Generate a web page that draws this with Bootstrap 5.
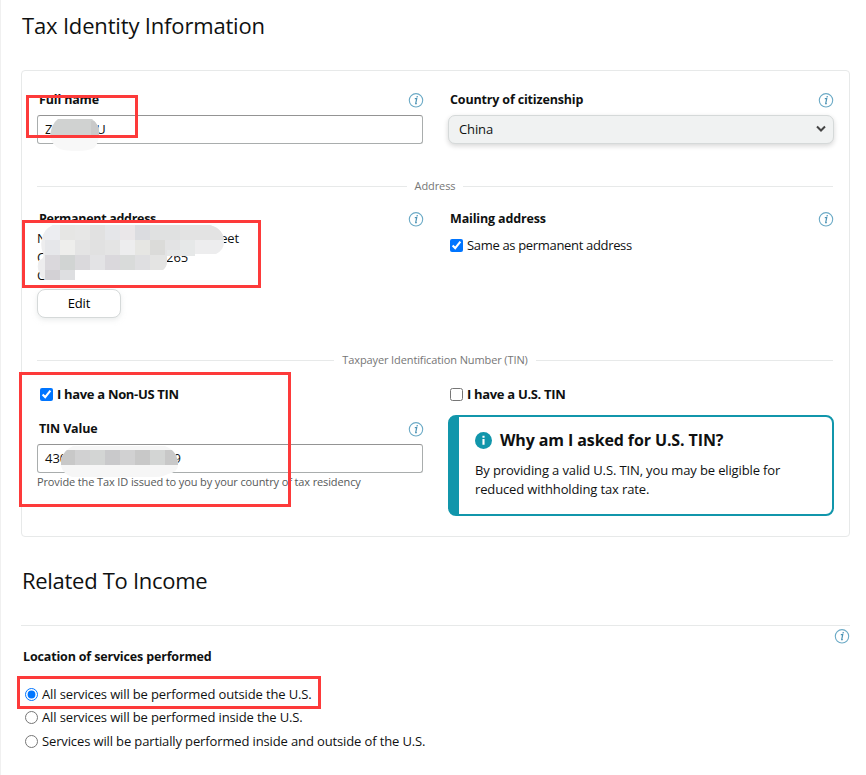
<!DOCTYPE html>
<html lang="en">
<head>
<meta charset="utf-8">
<meta name="viewport" content="width=device-width, initial-scale=1">
<title>Tax Identity Information</title>
<link href="https://cdn.jsdelivr.net/npm/bootstrap@5.3.0/dist/css/bootstrap.min.css" rel="stylesheet">
<style>
body{font-family:"Open Sans","Noto Sans",sans-serif;font-size:13px;line-height:19px;letter-spacing:-.13px;color:#0f1111;background:#fff;overflow:hidden}
.page{height:775px;border-left:1px solid #f0f0f0;padding:0 16px 0 20px}
.title{font-size:22px;line-height:30px;font-weight:400;margin:0;padding-left:1px;letter-spacing:-.17px}
.title-one{padding-top:10px}
.title-two{margin-top:28px;letter-spacing:-.29px}
.panel{margin-top:30px;height:467px;border:1px solid #e7e9e9;border-radius:4px;padding:19px 15px 0 15px}
.half{width:386px;flex:none}
.lbl{font-weight:700;font-size:12.5px;padding-left:2px;letter-spacing:-.16px}
.lbl-tight{letter-spacing:-.3px}
.head-row{height:19px;margin-bottom:6px}
.info{width:16px;height:16px;flex:none;display:block}
.half:not(.half-right) .info{margin-right:-1px}
.field{height:29px;border:1px solid #a9adad;border-radius:3px;border-top-color:#949494;padding:0 7px;line-height:27px;font-size:13px}
.field-tin{padding-right:241px;letter-spacing:0}
.picker{height:29px;border:1px solid #d5d9d9;border-radius:7px;background:#f0f2f2;box-shadow:0 2px 5px rgba(15,17,17,.17);padding:0 7px 1px 10px;line-height:25px}
.rule{height:1px;background:#e7e9e9}
.divider{gap:8px;margin-right:1px;font-size:11px;line-height:14px;letter-spacing:-.11px;color:#767676}
.divider-address{margin-top:35px}
.address-row{margin-top:16px;height:144px}
.address-row .head-row{margin-bottom:1px}
.address-lines{line-height:18.600px}
.line-one{width:202px}
.line-two{width:151px}
.edit-btn{--bs-btn-font-size:13px;width:84px;height:29px;margin-top:4px;padding:0;border:1px solid #d5d9d9;border-radius:8px;box-shadow:0 2px 5px rgba(213,217,217,.5);line-height:25px;letter-spacing:-.1px}
.choice{gap:4px;margin-left:3px}
.half-right .choice{margin-left:2px}
.choice-same{margin-top:8px;letter-spacing:-.33px}
.choice-tin{font-weight:700;letter-spacing:-.32px}
.tick{width:13px;height:13px;margin:0;flex:none;display:block;accent-color:#0075ff}
.tin-row{margin-top:18px}
.tin-head{margin-top:15px}
.hint{margin-top:1px;font-size:11px;line-height:15px;letter-spacing:-.12px;color:#565959;white-space:nowrap}
.notice{height:101px;margin-top:11px;border:2px solid #1196ab;border-left-width:11px;border-radius:8px;padding:11px 16px 0 16px}
.notice-head{gap:8px}
.notice-title{font-size:16px;line-height:24px;font-weight:700;margin:0;letter-spacing:-.11px}
.notice-text{margin-top:9px;line-height:18.500px}
.rule-income{margin-top:30px}
.income-info{margin-top:2px;height:16px}
.income-lbl{margin-top:3px}
.services{margin:17px 0 0 1px}
.services .choice{height:23.300px}
.marks{position:absolute;left:0;top:0;pointer-events:none}
.name-end{margin-left:44px}
</style>
<script src="https://cdn.jsdelivr.net/npm/bootstrap@5.3.0/dist/js/bootstrap.bundle.min.js"></script>
</head>
<body>
<svg width="0" height="0" class="position-absolute" aria-hidden="true">
  <symbol id="i-info" viewBox="0 0 16 16"><circle cx="8" cy="8.300" r="6.700" fill="#fff" stroke="#6baac6" stroke-width="1.100"/><path d="M8.700 4h1.200l-.3 1.500H8.400z" fill="#4b93b5"/><path d="M6.800 6.700h1.900l-1 4.900h1.100" fill="none" stroke="#4b93b5" stroke-width="1.200"/></symbol>
</svg>
<main class="page">
  <h1 class="title title-one">Tax Identity Information</h1>
  <section class="panel">
    <div class="d-flex justify-content-between">
      <div class="half">
        <div class="head-row d-flex justify-content-between align-items-center"><span class="lbl">Full name</span><svg class="info"><use href="#i-info"/></svg></div>
        <div class="field d-flex"><span>Z</span><span class="name-end">U</span></div>
      </div>
      <div class="half half-right">
        <div class="head-row d-flex justify-content-between align-items-center"><span class="lbl">Country of citizenship</span><svg class="info"><use href="#i-info"/></svg></div>
        <div class="picker d-flex justify-content-between align-items-center"><span>China</span><svg width="10" height="8" viewBox="0 0 10 8"><path d="M1 1.500l4 4 4-4" fill="none" stroke="#444" stroke-width="2"/></svg></div>
      </div>
    </div>
    <div class="divider divider-address d-flex align-items-center"><span class="rule flex-fill"></span><span>Address</span><span class="rule flex-fill"></span></div>
    <div class="address-row d-flex justify-content-between">
      <div class="half">
        <div class="head-row d-flex justify-content-between align-items-center"><span class="lbl lbl-tight">Permanent address</span><svg class="info"><use href="#i-info"/></svg></div>
        <div class="address-lines">
          <div class="line-one d-flex justify-content-between"><span>N</span><span>eet</span></div>
          <div class="line-two d-flex justify-content-between"><span>C</span><span>265</span></div>
          <div>China</div>
        </div>
        <button type="button" class="btn btn-light bg-white edit-btn d-block">Edit</button>
      </div>
      <div class="half half-right">
        <div class="head-row d-flex justify-content-between align-items-center"><span class="lbl">Mailing address</span><svg class="info"><use href="#i-info"/></svg></div>
        <label class="choice choice-same d-flex align-items-center"><input type="checkbox" class="tick" checked><span>Same as permanent address</span></label>
      </div>
    </div>
    <div class="divider d-flex align-items-center"><span class="rule flex-fill"></span><span>Taxpayer Identification Number (TIN)</span><span class="rule flex-fill"></span></div>
    <div class="tin-row d-flex justify-content-between">
      <div class="half">
        <label class="choice choice-tin d-flex align-items-center"><input type="checkbox" class="tick" checked><span>I have a Non-US TIN</span></label>
        <div class="head-row tin-head d-flex justify-content-between align-items-center"><span class="lbl">TIN Value</span><svg class="info"><use href="#i-info"/></svg></div>
        <div class="field field-tin d-flex justify-content-between"><span>430</span><span>9</span></div>
        <div class="hint">Provide the Tax ID issued to you by your country of tax residency</div>
      </div>
      <div class="half half-right">
        <label class="choice choice-tin d-flex align-items-center"><input type="checkbox" class="tick"><span>I have a U.S. TIN</span></label>
        <div class="notice">
          <div class="notice-head d-flex align-items-center"><svg width="17" height="17" viewBox="0 0 16 16"><circle cx="8" cy="8" r="8" fill="#1196ab"/><path d="M7 3.500h2v2H7zM7 6.500h2V12H7z" fill="#fff"/></svg><h2 class="notice-title">Why am I asked for U.S. TIN?</h2></div>
          <div class="notice-text">By providing a valid U.S. TIN, you may be eligible for<br>reduced withholding tax rate.</div>
        </div>
      </div>
    </div>
  </section>
  <h1 class="title title-two">Related To Income</h1>
  <div class="rule rule-income"></div>
  <div class="income-info d-flex justify-content-end"><svg class="info"><use href="#i-info"/></svg></div>
  <div class="lbl income-lbl">Location of services performed</div>
  <div class="services">
    <label class="choice d-flex align-items-center"><input type="radio" name="loc" class="tick" checked><span>All services will be performed outside the U.S.</span></label>
    <label class="choice d-flex align-items-center"><input type="radio" name="loc" class="tick"><span>All services will be performed inside the U.S.</span></label>
    <label class="choice d-flex align-items-center"><input type="radio" name="loc" class="tick"><span>Services will be partially performed inside and outside of the U.S.</span></label>
  </div>
</main>
<svg class="marks" width="866" height="775" viewBox="0 0 866 775">
  <defs>
    <clipPath id="c1"><path d="M58 119h34q7 6 7 12v5q-1 8-5 12-6 3-16 3-12 0-18-2-8-4-10-12 1-13 8-18z"/></clipPath>
    <clipPath id="c2"><path d="M53 225h157q14 4 14 17 0 8-8 12h-49v7q0 6-4 9H75v10H46q-6-2-6-6-4-6-1-14 6-1 4-7-3-7-1-14 1-9 11-14z"/></clipPath>
    <clipPath id="c3"><path d="M73 446h92q13 5 13 19 0 7-10 9-5 3-12 3H72q-9-3-11-11v-7q3-9 12-13z"/></clipPath>
  </defs>
  <g clip-path="url(#c1)"><path fill="#f8f8f8" d="M48 119h53v33H48z"/><path fill="#d0d2d1" d="M48 119h53v16H48z"/><path fill="#c9c9c9" d="M91 121h8v14h-8z"/></g>
  <g clip-path="url(#c2)" shape-rendering="crispEdges"><path fill="#ededee" d="M36 224h190v56H36z"/>
    <path fill="#ecedf1" d="M45 224h15v16H45z"/><path fill="#e6e6e4" d="M60 224h15v16H60z"/><path fill="#e7e7e6" d="M75 224h15v16H75z"/><path fill="#e1e1e1" d="M90 224h15v16H90z"/><path fill="#e5e6e9" d="M105 224h15v16h-15z"/><path fill="#eae7e9" d="M120 224h15v16h-15z"/><path fill="#dbdce0" d="M135 224h15v16h-15z"/><path fill="#e0e1e1" d="M150 224h60v16h-60z"/><path fill="#e3e3e3" d="M180 224h30v16h-30zM210 224h15v16h-15z"/>
    <path fill="#e6e7ea" d="M45 240h15v15H45z"/><path fill="#eeeeec" d="M60 240h15v15H60z"/><path fill="#e4e4e4" d="M75 240h15v15H75zM105 240h15v15h-15z"/><path fill="#e1e1e1" d="M90 240h15v15H90z"/><path fill="#e6e6e3" d="M135 240h15v15h-15z"/><path fill="#dbdbd9" d="M150 240h15v15h-15z"/><path fill="#e3e3e4" d="M165 240h15v15h-15z"/><path fill="#e6e8e8" d="M180 240h15v15h-15z"/>
    <path fill="#dad8dc" d="M45 255h15v15H45zM105 255h15v15h-15z"/><path fill="#d1d4d3" d="M60 255h15v15H60z"/><path fill="#dad9dc" d="M75 255h15v15H75z"/><path fill="#e3e3e5" d="M90 255h15v15H90z"/><path fill="#d9dbda" d="M120 255h15v15h-15z"/><path fill="#dfdfe1" d="M135 255h15v15h-15z"/><path fill="#e4e4e3" d="M150 255h17v15h-17z"/>
    <path fill="#d3d1d5" d="M45 270h15v10H45z"/><path fill="#dedfe1" d="M60 270h15v10H60z"/></g>
  <path fill="#e6e8e8" d="M167 250h28v6h-28z"/>
  <g clip-path="url(#c3)" shape-rendering="crispEdges"><path fill="#f6f6f6" d="M60 444h120v35H60z"/>
    <path fill="#c8c8c8" d="M60 450h15v15H60zM135 450h15v15h-15zM165 450h14v15h-14z"/><path fill="#d1d1d2" d="M75 450h15v15H75zM120 450h15v15h-15z"/><path fill="#d3d5d4" d="M90 450h15v15H90zM150 450h15v15h-15z"/><path fill="#c9c9cb" d="M105 450h15v15h-15z"/></g>
  <g fill="none" stroke="#fd3a3a" stroke-width="3"><path d="M27.500 96.500h109v40h-109z"/><path d="M23.500 221.500h236v65h-236z"/><path d="M20.500 373.500h269v132h-269z"/><path d="M18.500 677.500h301v30h-301z"/></g>
</svg>
</body>
</html>
